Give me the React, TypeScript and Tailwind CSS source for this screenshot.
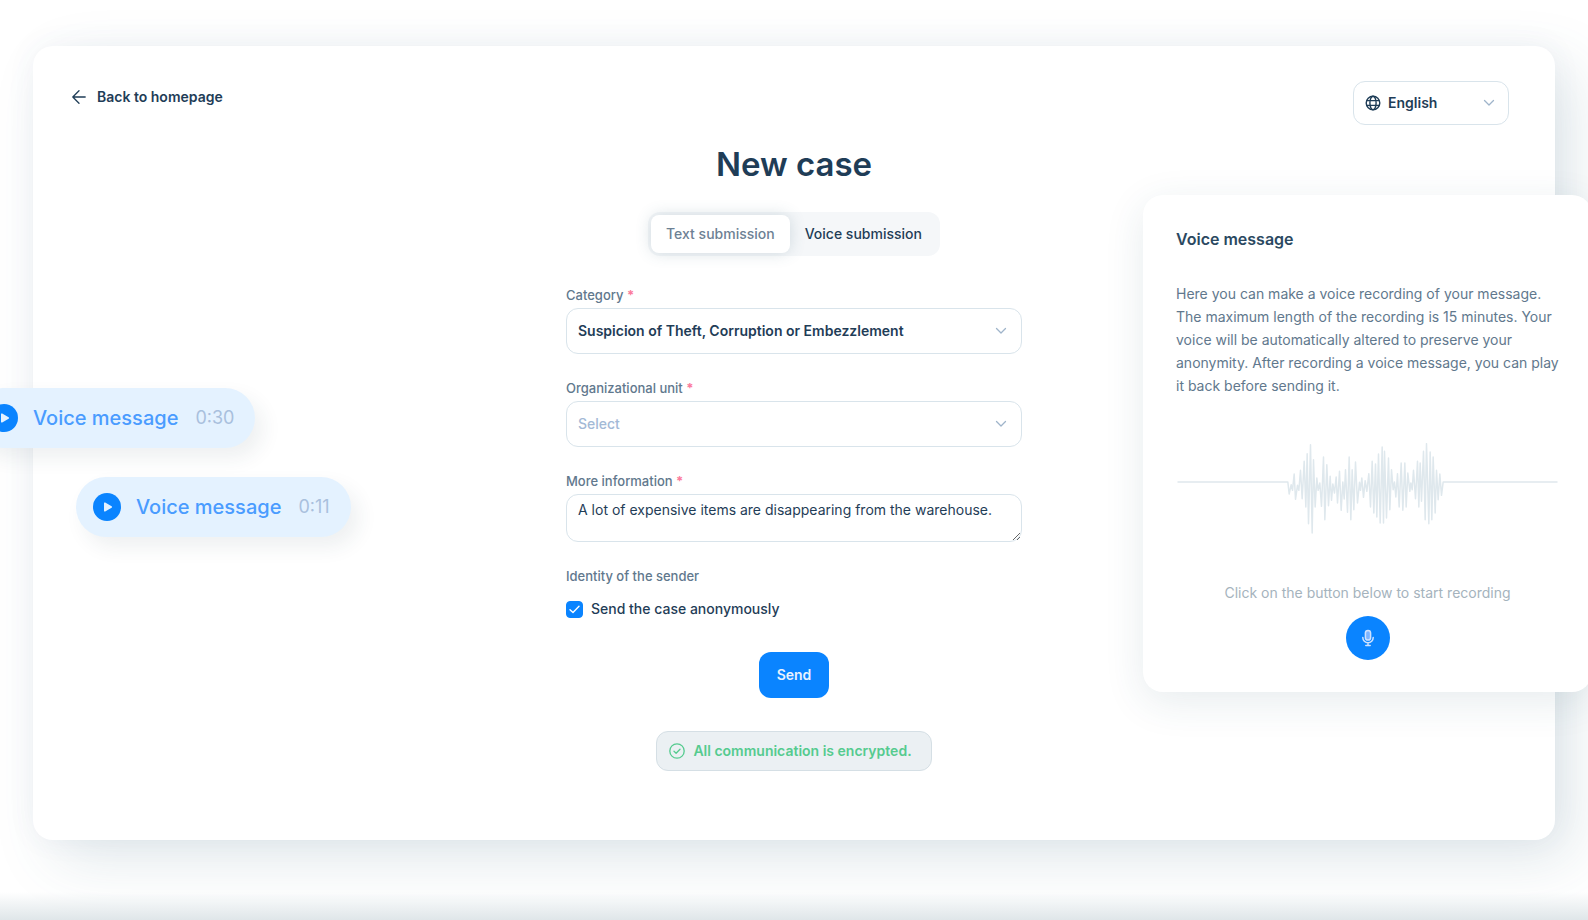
import { useState } from 'react';
import type { ReactNode } from 'react';
import clsx from 'clsx';

type SubmissionMode = 'text' | 'voice';

interface FieldProps {
  id: string;
  label: string;
  children: ReactNode;
}

interface VoicePillProps {
  duration: string;
  className: string;
}

const MODES: { id: SubmissionMode; label: string }[] = [
  { id: 'text', label: 'Text submission' },
  { id: 'voice', label: 'Voice submission' },
];

const WAVE_POINTS =
  '-279,157 52,157 56,193 62,165 66,182 71,133 75,209 81,167 85,182 90,122 95,207 101,95 106,232 110,72 114,282 120,45 125,310 129,90 134,232 139,145 143,182 148,160 153,230 159,82 163,270 169,105 174,228 179,140 183,212 187,163 192,190 197,142 201,220 207,125 212,242 217,157 221,208 225,120 231,248 236,82 241,270 245,120 250,240 255,97 261,220 267,158 270,182 274,145 279,203 284,153 289,185 295,132 300,232 305,95 310,250 315,103 319,262 324,73 329,280 335,52 339,280 342,65 348,265 354,85 358,240 363,120 368,180 372,157 376,202 381,132 386,232 392,100 397,242 403,100 407,232 412,130 418,185 421,160 425,180 429,122 435,207 441,95 445,232 449,100 453,215 459,65 464,270 468,42 475,282 479,67 484,270 488,82 494,250 498,122 503,210 508,133 513,197 518,157 861,157';

function Chevron({ className }: { className?: string }) {
  return (
    <svg viewBox="0 0 12 8" fill="none" stroke="#9fb4ca" strokeWidth="1.3" strokeLinecap="round" strokeLinejoin="round" className={clsx('pointer-events-none w-3 h-2', className)}>
      <path d="M1.5 1.5 6 6l4.5-4.5" />
    </svg>
  );
}

function Field({ id, label, children }: FieldProps) {
  return (
    <div className="flex flex-col gap-[5px]">
      <label htmlFor={id} className="text-[13px] leading-4 font-medium text-[#61788d]">
        {label} <span className="font-bold text-[#fb7a9b]">*</span>
      </label>
      {children}
    </div>
  );
}

function VoicePill({ duration, className }: VoicePillProps) {
  return (
    <div className={clsx('absolute flex h-[60px] items-center rounded-full bg-[#e4f2ff] pl-[17px] pr-[21px] shadow-[8px_10px_20px_rgba(40,60,80,0.08)]', className)}>
      <button type="button" aria-label="Play" className="flex size-7 items-center justify-center rounded-full bg-[#0a84ff]">
        <svg viewBox="0 0 28 28" className="size-7">
          <path d="M11 10.2v7.6a.8.8 0 0 0 1.2.7l6.4-3.8a.8.8 0 0 0 0-1.4l-6.4-3.8a.8.8 0 0 0-1.2.7Z" fill="#e4f2ff" />
        </svg>
      </button>
      <span className="ml-[15px] text-xl font-medium text-[#4a9cff]">Voice message</span>
      <span className="ml-[17px] text-lg text-[#a9c0dd]">{duration}</span>
    </div>
  );
}

function VoicePanel() {
  return (
    <aside className="absolute -right-1 top-[195px] flex w-[449px] flex-col rounded-[20px] bg-white px-[33px] pb-8 pt-8 shadow-[0_10px_40px_rgba(40,80,100,0.11)]">
      <h2 className="text-base leading-6 font-semibold text-[#2b4961]">Voice message</h2>
      <p className="-mr-1 mt-[31px] text-sm leading-[23px] text-[#61788d]">
        Here you can make a voice recording of your message. The maximum length of the recording is 15 minutes. Your voice will be automatically altered to preserve your anonymity. After recording a voice message, you can play it back before sending it.
      </p>
      <svg viewBox="-279 40 1140 276" fill="none" stroke="#dfe8ed" strokeWidth="4.5" strokeLinejoin="round" className="mt-[46px] h-[92px] w-full">
        <polyline points={WAVE_POINTS} />
      </svg>
      <p className="mt-12 text-center text-sm leading-5 text-[#a5b3bd]">Click on the button below to start recording</p>
      <button type="button" aria-label="Start recording" className="mt-[13px] flex size-11 items-center justify-center self-center rounded-full bg-[#0a84ff]">
        <svg viewBox="0 0 16 18" fill="none" stroke="#cfe2ff" strokeWidth="1.5" strokeLinecap="round" className="h-[18px] w-4">
          <rect x="5.4" y="1.5" width="5.2" height="9.5" rx="2.6" fill="#7db4ff" />
          <path d="M2.8 8.5a5.2 5.2 0 0 0 10.4 0M8 13.7v2.6M5.8 16.5h4.4" />
        </svg>
      </button>
    </aside>
  );
}

export default function App() {
  const [mode, setMode] = useState<SubmissionMode>('text');
  const [message, setMessage] = useState('A lot of expensive items are disappearing from the warehouse.');
  const [anonymous, setAnonymous] = useState(true);

  return (
    <div className="relative min-h-screen overflow-hidden bg-white px-[33px] pb-20 pt-[46px] font-['Inter',sans-serif] text-[#1f3d57]">
      <main className="relative rounded-[20px] bg-white px-[39px] pb-[69px] pt-[35px] shadow-[20px_20px_60px_rgba(60,110,130,0.15),0_0_30px_rgba(60,90,130,0.06)]">
        <header className="mr-[7px] flex items-start justify-between">
          <a href="#home" className="mt-1.5 flex items-center gap-[11px] text-sm leading-5 font-semibold">
            <svg viewBox="0 0 14 14" fill="none" stroke="currentColor" strokeWidth="1.3" strokeLinecap="round" strokeLinejoin="round" className="size-[14px]">
              <path d="M13.2 7H.8M7 .8.8 7 7 13.2" />
            </svg>
            Back to homepage
          </a>
          <div className="relative flex items-center">
            <svg viewBox="0 0 16 16" fill="none" stroke="currentColor" strokeWidth="1.4" className="pointer-events-none absolute left-3 size-4">
              <circle cx="8" cy="8" r="6.8" />
              <ellipse cx="8" cy="8" rx="3.1" ry="6.8" />
              <path d="M1.8 5.6h12.4M1.8 10.4h12.4" />
            </svg>
            <select aria-label="Language" className="h-11 w-[156px] appearance-none rounded-xl border border-[#d9e4eb] bg-transparent pl-[34px] text-sm font-semibold">
              <option>English</option>
            </select>
            <Chevron className="absolute right-[14px]" />
          </div>
        </header>

        <div className="mx-auto flex max-w-[456px] flex-col">
          <h1 className="mt-[19px] text-center text-[33px] leading-10 font-semibold">New case</h1>

          <div role="tablist" className="mt-7 flex h-11 self-center rounded-xl bg-[#f5f7f9] p-[3px]">
            {MODES.map((m) => (
              <button
                key={m.id}
                type="button"
                role="tab"
                aria-selected={mode === m.id}
                onClick={() => setMode(m.id)}
                className={clsx(
                  'rounded-lg px-[15px] text-sm font-medium',
                  mode === m.id && 'bg-white text-[#6d8194] shadow-[0_0_16px_rgba(60,100,120,0.2)]',
                )}
              >
                {m.label}
              </button>
            ))}
          </div>

          <form className="mt-[31px] flex flex-col gap-[26px]" onSubmit={(e) => e.preventDefault()}>
            <Field id="category" label="Category">
              <div className="relative flex items-center">
                <select id="category" className="h-[46px] w-full appearance-none rounded-xl border border-[#d9e4eb] bg-transparent px-[11px] text-sm font-semibold">
                  <option>Suspicion of Theft, Corruption or Embezzlement</option>
                </select>
                <Chevron className="absolute right-[15px]" />
              </div>
            </Field>
            <Field id="unit" label="Organizational unit">
              <div className="relative flex items-center">
                <select id="unit" className="h-[46px] w-full appearance-none rounded-xl border border-[#d9e4eb] bg-transparent px-[11px] text-sm font-medium text-[#a3b9d6]">
                  <option>Select</option>
                </select>
                <Chevron className="absolute right-[15px]" />
              </div>
            </Field>
            <Field id="details" label="More information">
              <textarea
                id="details"
                value={message}
                onChange={(e) => setMessage(e.target.value)}
                className="block h-12 w-full resize-y overflow-hidden rounded-xl border border-[#d9e4eb] bg-transparent px-[11px] py-[5px] text-sm leading-5"
              />
            </Field>

            <fieldset>
              <legend className="text-[13px] leading-4 font-medium text-[#61788d]">Identity of the sender</legend>
              <label className="mt-[15px] flex items-center gap-2 text-sm leading-5 font-medium">
                <span className="relative flex">
                  <input
                    type="checkbox"
                    checked={anonymous}
                    onChange={(e) => setAnonymous(e.target.checked)}
                    className="size-[17px] appearance-none rounded border border-[#d9e4eb] checked:border-[#0a84ff] checked:bg-[#0a84ff]"
                  />
                  {anonymous && (
                    <svg viewBox="0 0 17 17" fill="none" stroke="#fff" strokeWidth="1.4" strokeLinecap="round" strokeLinejoin="round" className="pointer-events-none absolute inset-0 size-[17px]">
                      <path d="m4 8.7 3 2.8 6-6.2" />
                    </svg>
                  )}
                </span>
                Send the case anonymously
              </label>
            </fieldset>

            <button type="submit" className="mt-[7px] h-[46px] self-center rounded-xl bg-[#0a84ff] px-[18px] text-sm font-semibold text-[#e8f2ff]">
              Send
            </button>
          </form>

          <p className="mt-[33px] flex h-10 items-center gap-2 self-center rounded-xl border border-[#d5dfe5] bg-[#ebf0f3] pl-3 pr-[19px] text-sm font-semibold text-[#55cb8f]">
            <svg viewBox="0 0 16 16" fill="none" stroke="currentColor" strokeWidth="1.3" strokeLinecap="round" strokeLinejoin="round" className="size-4">
              <circle cx="8" cy="8" r="7.2" />
              <path d="m5 8.3 2.1 2 3.9-4.1" />
            </svg>
            All communication is encrypted.
          </p>
        </div>
      </main>

      <div className="absolute inset-x-0 bottom-0 h-7 bg-linear-to-t from-[#dfe6e9] to-transparent" />

      <VoicePill duration="0:30" className="-left-[27px] top-[388px]" />
      <VoicePill duration="0:11" className="left-[76px] top-[477px]" />
      <VoicePanel />
    </div>
  );
}
